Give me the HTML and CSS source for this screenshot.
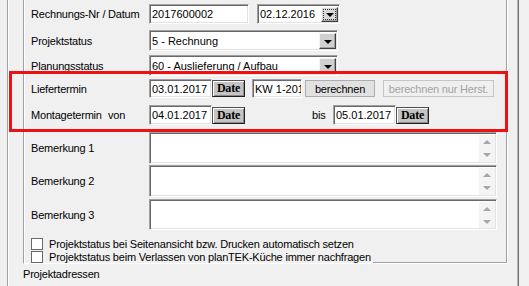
FILE: index.html
```html
<!DOCTYPE html>
<html lang="de">
<head>
<meta charset="utf-8">
<title>Projekt</title>
<link rel="stylesheet" href="styles.css">
</head>
<body>
<div class="tab">
  <div class="group">
    <div class="row r1">
      <span class="lbl">Rechnungs-Nr / Datum</span>
      <div class="field w-nr">2017600002</div>
      <div class="field combo w-dcombo"><span class="val">02.12.2016</span><span class="drop focus"><span class="tri"></span></span></div>
    </div>
    <div class="row r2">
      <span class="lbl">Projektstatus</span>
      <div class="field combo w-sel"><span class="val">5 - Rechnung</span><span class="drop"><span class="tri"></span></span></div>
    </div>
    <div class="row r3">
      <span class="lbl">Planungsstatus</span>
      <div class="field combo w-sel"><span class="val">60 - Auslieferung / Aufbau</span><span class="drop"><span class="tri"></span></span></div>
    </div>
    <div class="row r4">
      <span class="lbl">Liefertermin</span>
      <div class="field w-date">03.01.2017</div>
      <button class="datebtn">Date</button>
      <div class="field w-kw">KW 1-201</div>
      <button class="btn w-calc">berechnen</button>
      <button class="btn disabled w-calc2">berechnen nur Herst.</button>
    </div>
    <div class="row r5">
      <span class="lbl"><span class="lbl-main">Montagetermin</span>von</span>
      <div class="field w-date">04.01.2017</div>
      <button class="datebtn">Date</button>
      <span class="bis">bis</span>
      <div class="field w-date">05.01.2017</div>
      <button class="datebtn">Date</button>
    </div>
    <div class="row memo m1">
      <span class="lbl">Bemerkung 1</span>
      <div class="field memo-box"><div class="memo-scroll"><span class="up"></span><span class="down"></span></div></div>
    </div>
    <div class="row memo m2">
      <span class="lbl">Bemerkung 2</span>
      <div class="field memo-box"><div class="memo-scroll"><span class="up"></span><span class="down"></span></div></div>
    </div>
    <div class="row memo m3">
      <span class="lbl">Bemerkung 3</span>
      <div class="field memo-box"><div class="memo-scroll"><span class="up"></span><span class="down"></span></div></div>
    </div>
    <div class="check c1"><span class="box"></span>Projektstatus bei Seitenansicht bzw. Drucken automatisch setzen</div>
    <div class="check c2"><span class="box"></span>Projektstatus beim Verlassen von planTEK-Küche immer nachfragen</div>
  </div>
  <div class="footer">Projektadressen</div>
</div>
<div class="annot"></div>
</body>
</html>
```
FILE: styles.css
```css
body {
  margin: 0;
  width: 529px;
  height: 286px;
  overflow: hidden;
  position: relative;
  background: #f0f0f0;
  font-family: "Liberation Sans", Arial, sans-serif;
  font-size: 11px;
  letter-spacing: -0.2px;
  color: #000;
}

.tab {
  margin-left: 7px;
  width: 510px;
  height: 286px;
  border-left: 1px solid #a0a0a0;
  border-right: 1px solid #6e6e6e;
  box-shadow: inset 1px 0 #fff, inset -1px 0 #b4b4b4;
}

.group {
  margin-left: 15px;
  width: 485px;
  padding: 4px 0 0 7px;
  box-sizing: border-box;
  border-left: 1px solid #a0a0a0;
  border-right: 1px solid #fff;
  border-bottom: 1px solid #fff;
  box-shadow: inset 1px 0 #fff, inset -1px 0 #a0a0a0, inset 0 -1px #a0a0a0;
}

.row {
  display: flex;
  align-items: center;
}

.lbl {
  width: 118px;
  flex: none;
  white-space: nowrap;
  display: flex;
}

.lbl-main {
  width: 77px;
}

.r1 { height: 20px; }
.r2 { height: 21px; margin-top: 6px; }
.r3 { height: 21px; margin-top: 4px; }
.r4 { height: 19px; margin-top: 3px; }
.r5 { height: 20px; margin-top: 7px; }
.m1 { height: 32px; margin-top: 7px; }
.m2 { height: 32px; margin-top: 1px; }
.m3 { height: 31px; margin-top: 2px; }

.field {
  box-sizing: border-box;
  height: 100%;
  background: #fff;
  border: 1px solid;
  border-color: #a0a0a0 #fff #fff #a0a0a0;
  box-shadow: inset 1px 1px #696969, inset -1px -1px #e3e3e3;
  padding-left: 2px;
  display: flex;
  align-items: center;
  white-space: nowrap;
  overflow: hidden;
  letter-spacing: 0;
  flex: none;
}

.w-nr { width: 100px; }
.w-dcombo { width: 83px; margin-left: 8px; }
.w-sel { width: 189px; }
.w-date { width: 63px; }
.w-kw { width: 50px; margin-left: 7px; }

.combo .val {
  flex: 1;
  overflow: hidden;
}

.drop {
  flex: none;
  box-sizing: border-box;
  width: 17px;
  align-self: stretch;
  margin: 2px 1px 1px 0;
  background: #d0d0d0;
  border: 1px solid;
  border-color: #f4f4f4 #404040 #404040 #f4f4f4;
  box-shadow: inset -1px -1px #a0a0a0;
  display: flex;
  align-items: center;
  justify-content: center;
}

.drop.focus {
  background: #d8d8d8;
  outline: 1px dotted #333;
  outline-offset: -3px;
}

.tri {
  width: 0;
  height: 0;
  border-left: 4px solid transparent;
  border-right: 4px solid transparent;
  border-top: 4px solid #000;
  margin-top: 1px;
}

.datebtn {
  flex: none;
  box-sizing: border-box;
  width: 33px;
  height: 17px;
  padding: 0;
  margin: 0;
  background: #c4c4c4;
  border: 1px solid;
  border-color: #505050 #202020 #202020 #505050;
  box-shadow: inset 1px 1px #fff, inset -1px -1px #8a8a8a;
  font-family: "Liberation Serif", "Times New Roman", serif;
  font-weight: bold;
  font-size: 12px;
  letter-spacing: -0.2px;
  color: #000;
}

.btn {
  flex: none;
  box-sizing: border-box;
  height: 17px;
  padding: 0;
  background: #e1e1e1;
  border: 1px solid #adadad;
  font-family: "Liberation Sans", Arial, sans-serif;
  font-size: 11px;
  letter-spacing: -0.2px;
  color: #000;
}

.w-calc { width: 70px; margin-left: 3px; }
.w-calc2 { width: 111px; margin-left: 8px; }

.btn.disabled {
  background: #efefef;
  border-color: #c6c6c6;
  color: #a3a3a3;
}

.bis {
  margin-left: 67px;
  width: 21px;
  flex: none;
}

.memo-box {
  width: 348px;
  justify-content: flex-end;
  padding: 2px 1px 1px 0;
  align-items: stretch;
}

.memo-scroll {
  width: 16px;
  background: #f4f4f4;
  display: flex;
  flex-direction: column;
  align-items: center;
  justify-content: space-around;
}

.up {
  width: 0;
  height: 0;
  border-left: 4px solid transparent;
  border-right: 4px solid transparent;
  border-bottom: 4px solid #a6a6a6;
}

.down {
  width: 0;
  height: 0;
  border-left: 4px solid transparent;
  border-right: 4px solid transparent;
  border-top: 4px solid #a6a6a6;
}

.check {
  display: flex;
  align-items: center;
  height: 13px;
  width: fit-content;
  white-space: nowrap;
  background: #f0f0f0;
  margin-left: -6px;
  padding-left: 6px;
  padding-right: 2px;
}

.c1 { margin-top: 7px; }

.box {
  box-sizing: border-box;
  width: 12px;
  height: 12px;
  border: 1px solid #6a6a6a;
  background: #fff;
  margin-right: 6px;
  flex: none;
}

.footer {
  margin-left: 15px;
  margin-top: 4px;
  line-height: 13px;
}

.annot {
  position: absolute;
  left: 9px;
  top: 71px;
  width: 499px;
  height: 61px;
  box-sizing: border-box;
  border: 3px solid #ee1111;
}
```
